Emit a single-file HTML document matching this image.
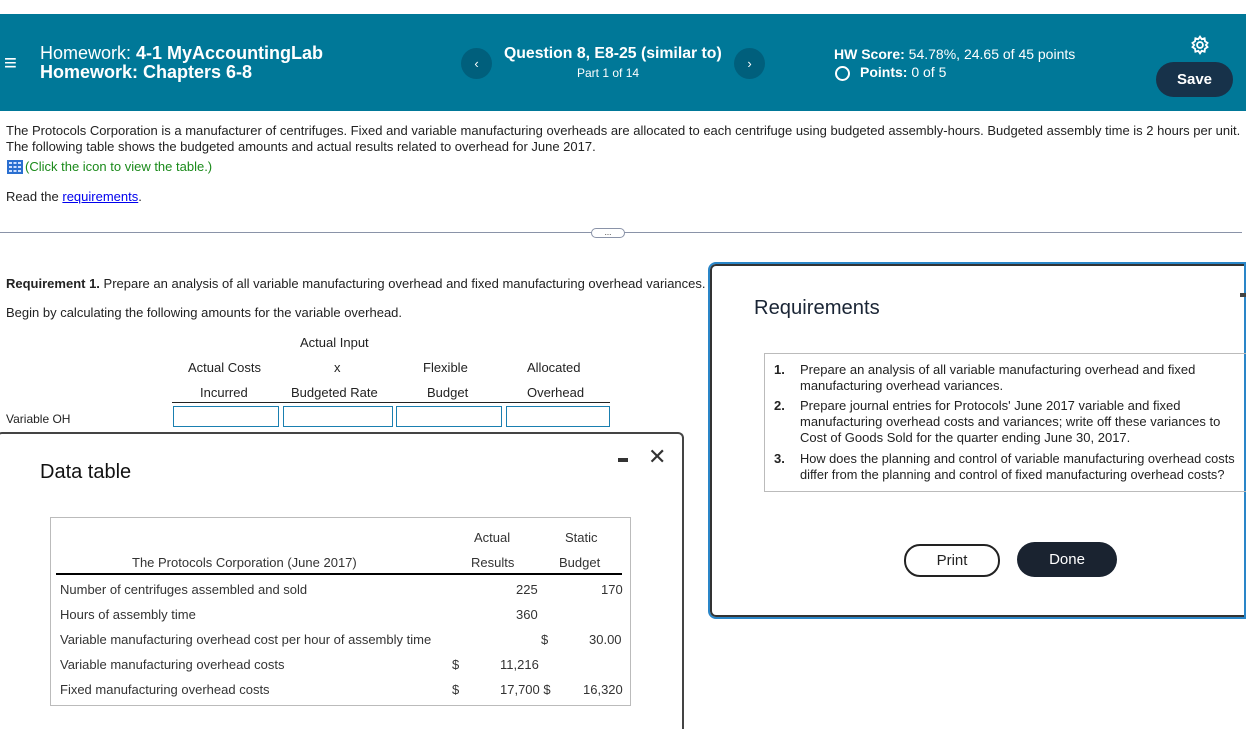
<!DOCTYPE html>
<html style="overflow:hidden"><head><style>
html,body{overflow:hidden}
body{margin:0;width:1246px;height:729px;overflow:hidden;background:#fff;font-family:"Liberation Sans",sans-serif;color:#222;position:relative}
.a{position:absolute;white-space:nowrap}
.hdr{position:absolute;left:0;top:14px;width:1246px;height:97px;background:#007898}
.w{color:#fff}
.t{font-size:13px}
.box{position:absolute;border:1px solid #1a7fb0;height:19px;top:406px}
</style></head><body>
<div class="hdr"></div>
<div class="a w" style="left:4px;top:50px;font-size:22px">&#8801;</div>
<div class="a w" style="left:40px;top:44px;font-size:18px;line-height:19px">Homework: <b>4-1 MyAccountingLab</b><br><b>Homework: Chapters 6-8</b></div>
<div class="a" style="left:461px;top:48px;width:31px;height:31px;border-radius:50%;background:#005f7c;color:#fff;text-align:center;line-height:31px;font-size:13px">&#8249;</div>
<div class="a w" style="left:504px;top:45px;font-size:15.8px;font-weight:bold">Question 8, E8-25 (similar to)</div>
<div class="a w" style="left:577px;top:66px;font-size:12px">Part 1 of 14</div>
<div class="a" style="left:734px;top:48px;width:31px;height:31px;border-radius:50%;background:#005f7c;color:#fff;text-align:center;line-height:31px;font-size:13px">&#8250;</div>
<div class="a w" style="left:834px;top:46px;font-size:14px"><b>HW Score:</b> 54.78%, 24.65 of 45 points</div>
<div class="a" style="left:835px;top:66px;width:11px;height:11px;border:2px solid #fff;border-radius:50%"></div>
<div class="a w" style="left:860px;top:64px;font-size:14px"><b>Points:</b> 0 of 5</div>
<svg class="a" style="left:1190px;top:35px" width="20" height="20" viewBox="0 0 24 24" fill="none" stroke="#fff" stroke-width="2.2"><circle cx="12" cy="12" r="3.5"/><path d="M12 2l2 3 3.5-1 .5 3.5 3 2-2 2.5 2 2.5-3 2-.5 3.5-3.5-1-2 3-2-3-3.5 1-.5-3.5-3-2 2-2.5-2-2.5 3-2 .5-3.5 3.5 1z"/></svg>
<div class="a" style="left:1156px;top:62px;width:77px;height:35px;border-radius:18px;background:#17324a;color:#fff;font-weight:bold;font-size:15px;text-align:center;line-height:35px">Save</div>

<div class="a t" style="left:6px;top:123px;line-height:16px">The Protocols Corporation is a manufacturer of centrifuges. Fixed and variable manufacturing overheads are allocated to each centrifuge using budgeted assembly-hours. Budgeted assembly time is 2 hours per unit.<br>The following table shows the budgeted amounts and actual results related to overhead for June 2017.</div>
<svg class="a" style="left:7px;top:160px" width="16" height="14"><rect width="16" height="14" fill="#2a6fd0"/><g fill="#cfe0ff"><rect x="2" y="2" width="3" height="2"/><rect x="6.5" y="2" width="3" height="2"/><rect x="11" y="2" width="3" height="2"/><rect x="2" y="6" width="3" height="2"/><rect x="6.5" y="6" width="3" height="2"/><rect x="11" y="6" width="3" height="2"/><rect x="2" y="10" width="3" height="2"/><rect x="6.5" y="10" width="3" height="2"/><rect x="11" y="10" width="3" height="2"/></g></svg>
<div class="a t" style="left:25px;top:159px;color:#1a8a1a">(Click the icon to view the table.)</div>
<div class="a t" style="left:6px;top:189px">Read the <span style="color:#0000ee;text-decoration:underline">requirements</span>.</div>
<div class="a" style="left:0;top:232px;width:1242px;height:1px;background:#8a93a8"></div>
<div class="a" style="left:591px;top:228px;width:32px;height:8px;border:1px solid #8a93a8;border-radius:5px;background:#fff;font-size:8px;line-height:7px;text-align:center">...</div>

<div class="a t" style="left:6px;top:276px"><b>Requirement 1.</b> Prepare an analysis of all variable manufacturing overhead and fixed manufacturing overhead variances.</div>
<div class="a t" style="left:6px;top:305px">Begin by calculating the following amounts for the variable overhead.</div>
<div class="a t" style="left:300px;top:335px">Actual Input</div>
<div class="a t" style="left:188px;top:360px">Actual Costs</div>
<div class="a t" style="left:334px;top:360px">x</div>
<div class="a t" style="left:423px;top:360px">Flexible</div>
<div class="a t" style="left:527px;top:360px">Allocated</div>
<div class="a t" style="left:200px;top:385px">Incurred</div>
<div class="a t" style="left:291px;top:385px">Budgeted Rate</div>
<div class="a t" style="left:427px;top:385px">Budget</div>
<div class="a t" style="left:527px;top:385px">Overhead</div>
<div class="a" style="left:172px;top:402px;width:438px;height:1px;background:#222"></div>
<div class="a" style="left:6px;top:412px;font-size:12px">Variable OH</div>
<div class="box" style="left:173px;width:104px"></div>
<div class="box" style="left:283px;width:108px"></div>
<div class="box" style="left:396px;width:104px"></div>
<div class="box" style="left:506px;width:102px"></div>

<div class="a" style="left:-4px;top:432px;width:684px;height:295px;border:2px solid #444;border-bottom:none;border-radius:6px 6px 0 0;background:#fff"></div>
<div class="a" style="left:40px;top:461px;font-size:20px;color:#111">Data table</div>
<div class="a" style="left:618px;top:458px;width:10px;height:4px;background:#333"></div>
<div class="a" style="left:648px;top:444px;font-size:22px;color:#333">&#10005;</div>
<div class="a" style="left:50px;top:517px;width:579px;height:187px;border:1px solid #bbb"></div>
<div class="a t" style="left:474px;top:530px;color:#333">Actual</div>
<div class="a t" style="left:565px;top:530px;color:#333">Static</div>
<div class="a t" style="left:132px;top:555px;color:#333">The Protocols Corporation (June 2017)</div>
<div class="a t" style="left:471px;top:555px;color:#333">Results</div>
<div class="a t" style="left:559px;top:555px;color:#333">Budget</div>
<div class="a" style="left:56px;top:573px;width:566px;height:2px;background:#000"></div>
<div class="a t" style="left:60px;top:582px;color:#333">Number of centrifuges assembled and sold</div>
<div class="a t" style="left:60px;top:607px;color:#333">Hours of assembly time</div>
<div class="a t" style="left:60px;top:632px;color:#333">Variable manufacturing overhead cost per hour of assembly time</div>
<div class="a t" style="left:60px;top:657px;color:#333">Variable manufacturing overhead costs</div>
<div class="a t" style="left:60px;top:682px;color:#333">Fixed manufacturing overhead costs</div>
<div class="a t" style="left:516px;top:582px;color:#333">225</div>
<div class="a t" style="left:601px;top:582px;color:#333">170</div>
<div class="a t" style="left:516px;top:607px;color:#333">360</div>
<div class="a t" style="left:541px;top:632px;color:#333">$</div>
<div class="a t" style="left:589px;top:632px;color:#333">30.00</div>
<div class="a t" style="left:452px;top:657px;color:#333">$</div>
<div class="a t" style="left:500px;top:657px;color:#333">11,216</div>
<div class="a t" style="left:452px;top:682px;color:#333">$</div>
<div class="a t" style="left:500px;top:682px;color:#333">17,700 $</div>
<div class="a t" style="left:583px;top:682px;color:#333">16,320</div>

<div class="a" style="left:710px;top:264px;width:532px;height:349px;border:2px solid #333;border-right:none;outline:2px solid #2a86c8;border-radius:6px 0 0 6px;background:#fff"></div>
<div class="a" style="left:754px;top:297px;font-size:20.2px;color:#1a2535">Requirements</div>
<div class="a" style="left:1240px;top:293px;width:6px;height:4px;background:#444"></div>
<div class="a" style="left:764px;top:353px;width:481px;height:137px;border:1px solid #bbb;border-right:none"></div>
<div class="a t" style="left:774px;top:362px;line-height:16px;color:#222">
<div style="position:relative;height:32px"><b style="position:absolute;left:0">1.</b><span style="position:absolute;left:26px">Prepare an analysis of all variable manufacturing overhead and fixed<br>manufacturing overhead variances.</span></div>
<div style="position:relative;height:53px;margin-top:4px"><b style="position:absolute;left:0">2.</b><span style="position:absolute;left:26px">Prepare journal entries for Protocols' June 2017 variable and fixed<br>manufacturing overhead costs and variances; write off these variances to<br>Cost of Goods Sold for the quarter ending June 30, 2017.</span></div>
<div style="position:relative;height:32px"><b style="position:absolute;left:0">3.</b><span style="position:absolute;left:26px;font-size:12.8px">How does the planning and control of variable manufacturing overhead costs<br>differ from the planning and control of fixed manufacturing overhead costs?</span></div>
</div>
<div class="a" style="left:904px;top:544px;width:92px;height:29px;border:2px solid #222;border-radius:16px;text-align:center;line-height:29px;font-size:15px">Print</div>
<div class="a" style="left:1017px;top:542px;width:100px;height:35px;border-radius:18px;background:#1a2330;color:#fff;text-align:center;line-height:35px;font-size:15px">Done</div>
</body></html>
